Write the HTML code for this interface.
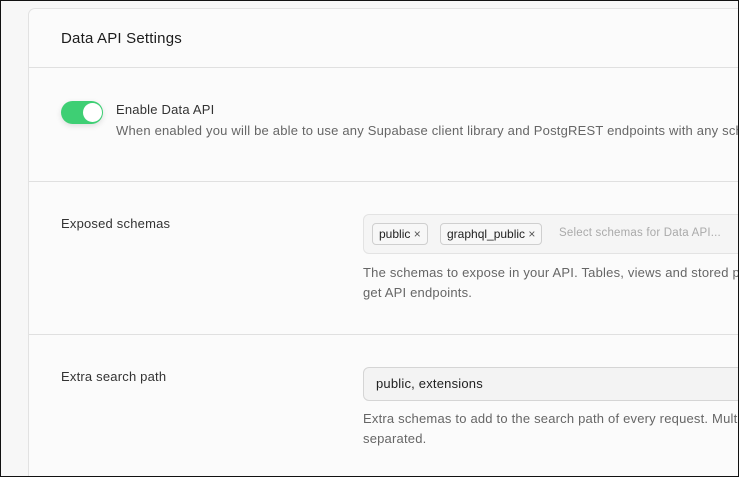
<!DOCTYPE html>
<html><head><style>
*{margin:0;padding:0;box-sizing:border-box}
html,body{width:739px;height:477px;overflow:hidden;background:#f7f7f7;font-family:"Liberation Sans",sans-serif}
.wrap{position:relative;width:739px;height:477px;overflow:hidden}
.frame{position:absolute;left:0;top:0;width:739px;height:477px;border:1px solid #111;z-index:10}
.card{position:absolute;left:28px;top:8px;width:711px;height:469px;background:#fbfbfb;border:1px solid #e2e2e2;border-right:none;border-bottom:none;border-radius:7px 0 0 0}
.t{position:absolute;white-space:nowrap;letter-spacing:.2px}
.hr{position:absolute;left:29px;width:710px;height:1px;background:#e0e0e0}
.tag{position:absolute;top:223px;height:22px;border:1px solid #cfcfcf;border-radius:4px;background:#f7f7f7;font-size:12px;color:#222;padding:3px 6px;white-space:nowrap}
.x{color:#555;font-size:12px}
</style></head><body><div class="wrap">
<div class="card"></div>
<div class="t" style="left:61px;top:30px;font-size:15px;color:#1c1c1c">Data API Settings</div>
<div class="hr" style="top:67px"></div>
<div style="position:absolute;left:61px;top:101px;width:42px;height:23px;border-radius:12px;background:#3ecf74;box-shadow:0 2px 6px rgba(0,0,0,.12)"></div>
<div style="position:absolute;left:83px;top:103px;width:19px;height:19px;border-radius:50%;background:#fff"></div>
<div class="t" style="left:116px;top:102px;font-size:13px;color:#333">Enable Data API</div>
<div class="t" style="left:116px;top:123px;font-size:13px;color:#666">When enabled you will be able to use any Supabase client library and PostgREST endpoints with any schema</div>
<div class="hr" style="top:181px"></div>
<div class="t" style="left:61px;top:216px;font-size:13px;color:#333">Exposed schemas</div>
<div style="position:absolute;left:363px;top:214px;width:380px;height:40px;border:1px solid #e3e3e3;border-radius:6px;background:#f5f5f5"></div>
<div class="tag" style="left:372px">public <span class="x">×</span></div>
<div class="tag" style="left:440px">graphql_public <span class="x">×</span></div>
<div class="t" style="left:559px;top:227px;font-size:11.5px;color:#aaa">Select schemas for Data API...</div>
<div class="t" style="left:363px;top:263px;font-size:13px;color:#666;line-height:20px">The schemas to expose in your API. Tables, views and stored procedures<br>get API endpoints.</div>
<div class="hr" style="top:334px"></div>
<div class="t" style="left:61px;top:369px;font-size:13px;color:#333">Extra search path</div>
<div style="position:absolute;left:363px;top:367px;width:380px;height:34px;border:1px solid #d5d5d5;border-radius:6px;background:#f3f3f3"></div>
<div class="t" style="left:376px;top:376px;font-size:13px;color:#222">public, extensions</div>
<div class="t" style="left:363px;top:409px;font-size:13px;color:#666;line-height:20px">Extra schemas to add to the search path of every request. Multiple<br>separated.</div>
<div class="frame"></div>
</div></body></html>
